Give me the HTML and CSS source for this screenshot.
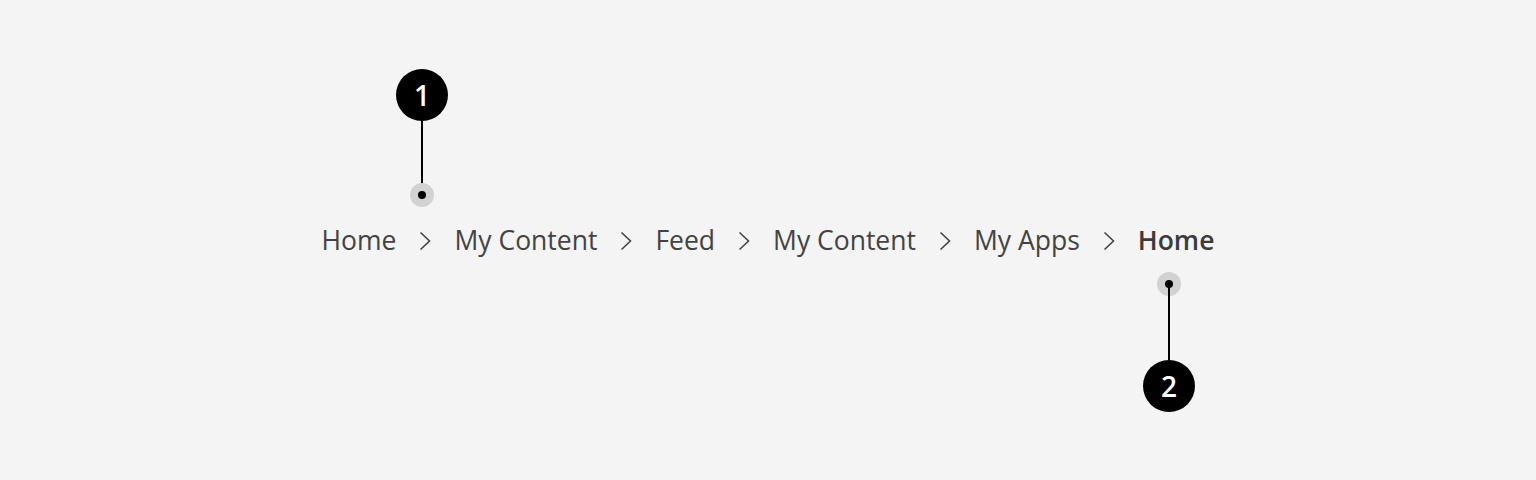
FILE: index.html
```html
<!DOCTYPE html>
<html>
<head>
<meta charset="utf-8">
<link rel="stylesheet" href="styles.css">
</head>
<body>
<div class="page">
  <nav class="crumbs">
    <span class="crumb">Home</span>
    <svg class="chev" viewBox="0 0 12 20" width="12" height="20"><path d="M1.5 1.5 L10.5 10 L1.5 18.5" fill="none" stroke="#444" stroke-width="1.6"/></svg>
    <span class="crumb">My Content</span>
    <svg class="chev" viewBox="0 0 12 20" width="12" height="20"><path d="M1.5 1.5 L10.5 10 L1.5 18.5" fill="none" stroke="#444" stroke-width="1.6"/></svg>
    <span class="crumb">Feed</span>
    <svg class="chev" viewBox="0 0 12 20" width="12" height="20"><path d="M1.5 1.5 L10.5 10 L1.5 18.5" fill="none" stroke="#444" stroke-width="1.6"/></svg>
    <span class="crumb">My Content</span>
    <svg class="chev" viewBox="0 0 12 20" width="12" height="20"><path d="M1.5 1.5 L10.5 10 L1.5 18.5" fill="none" stroke="#444" stroke-width="1.6"/></svg>
    <span class="crumb">My Apps</span>
    <svg class="chev" viewBox="0 0 12 20" width="12" height="20"><path d="M1.5 1.5 L10.5 10 L1.5 18.5" fill="none" stroke="#444" stroke-width="1.6"/></svg>
    <span class="crumb current">Home</span>
  </nav>

  <div class="marker marker-top">
    <div class="badge">1</div>
    <div class="stem"></div>
    <div class="halo"><div class="dot"></div></div>
  </div>

  <div class="marker marker-bottom">
    <div class="halo"><div class="dot"></div></div>
    <div class="stem"></div>
    <div class="badge">2</div>
  </div>
</div>
</body>
</html>
```
FILE: styles.css
```css
html, body {
  margin: 0;
  padding: 0;
  background: #f4f4f4;
}
.page {
  position: relative;
  width: 1536px;
  height: 480px;
  font-family: "Open Sans", "Noto Sans", sans-serif;
}
.crumbs {
  display: flex;
  justify-content: center;
  align-items: center;
  gap: 23px;
  padding-top: 222px;
  height: 36px;
}
.crumb {
  font-size: 26.5px;
  line-height: 36px;
  color: #434343;
  white-space: nowrap;
}
.crumb.current {
  font-weight: 600;
  color: #3b3b3b;
}
.chev {
  display: block;
  margin-top: 1px;
}
.marker {
  position: absolute;
  display: flex;
  flex-direction: column;
  align-items: center;
  width: 52px;
}
.marker-top {
  left: 396px;
  top: 69px;
}
.marker-bottom {
  left: 1143px;
  top: 272px;
}
.badge {
  width: 52px;
  height: 52px;
  border-radius: 50%;
  background: #000;
  color: #fff;
  font-size: 28px;
  font-weight: 600;
  line-height: 52px;
  text-align: center;
  flex: none;
}
.stem {
  width: 2px;
  background: #000;
  flex: none;
}
.halo {
  width: 24px;
  height: 24px;
  border-radius: 50%;
  background: #d2d2d2;
  display: flex;
  align-items: center;
  justify-content: center;
  flex: none;
}
.marker-top .stem {
  height: 74px;
}
.marker-top .halo {
  margin-top: -12px;
}
.marker-bottom .stem {
  margin-top: -12px;
  height: 76px;
}
.dot {
  width: 8px;
  height: 8px;
  border-radius: 50%;
  background: #000;
}
```
